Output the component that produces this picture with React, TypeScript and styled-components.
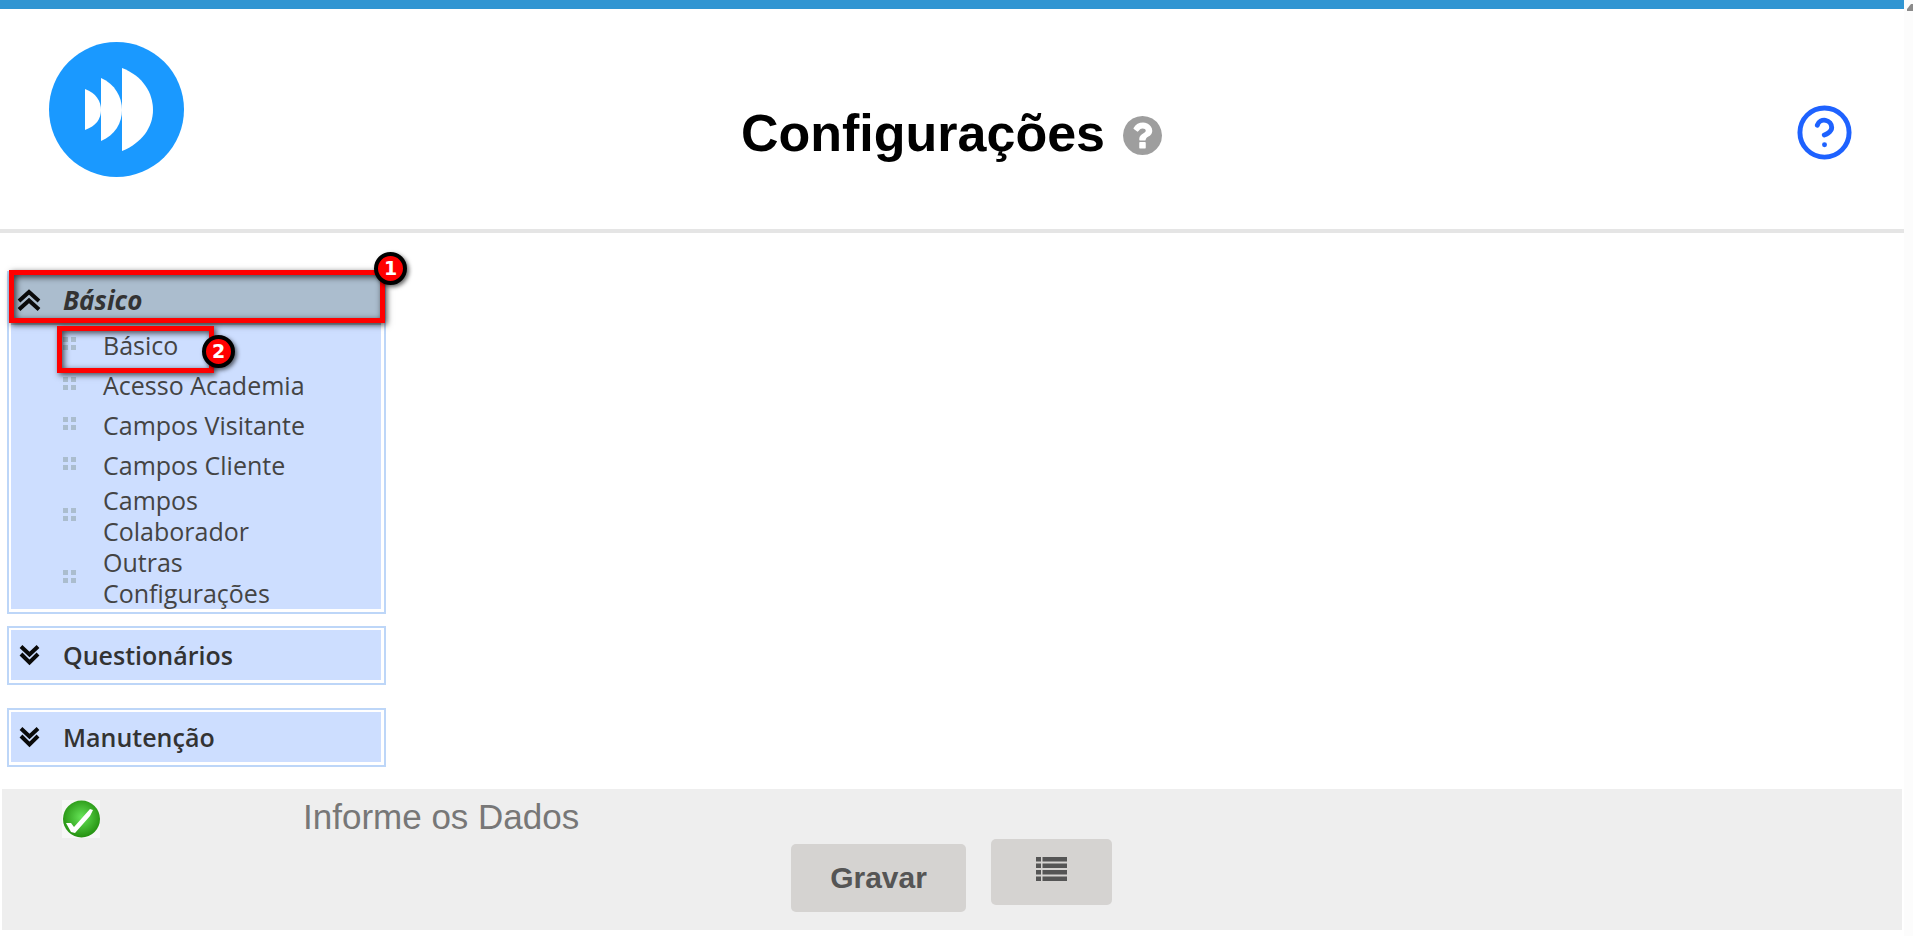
import React from "react";
import styled, { createGlobalStyle, css } from "styled-components";
import { CircleHelp } from "lucide-react";

const Global = createGlobalStyle`
  * { box-sizing: border-box; }
  body { margin: 0; background: #fff; font-family: "Liberation Sans", Arial, sans-serif; }
`;

const Page = styled.div`
  display: flex;
  min-height: 100vh;
`;

const Content = styled.div`
  flex: 1;
  min-width: 0;
`;

const ScrollTrack = styled.div`
  width: 9px;
  overflow: hidden;
  background: #fcfcfc;
  padding: 4px 0 0 3px;
  svg { display: block; }
`;

const Header = styled.header`
  display: grid;
  grid-template-columns: 1fr auto 1fr;
  align-items: center;
  height: 233px;
  padding: 0 50px 0 49px;
  border-top: 9px solid #3195d2;
  border-bottom: 4px solid #e5e5e5;
`;

const Logo = styled.svg`
  display: block;
  width: 135px;
  height: 135px;
  margin-bottom: 20px;
`;

const Title = styled.h1`
  display: flex;
  align-items: center;
  gap: 18px;
  margin: 28px 0 0;
  font-size: 52px;
  line-height: 60px;
  color: #000;
`;

const TitleHelp = styled.svg`
  width: 39px;
  height: 39px;
  margin-top: 4px;
  fill: #9e9e9e;
`;

const HelpLink = styled.a`
  justify-self: end;
  display: flex;
  margin-top: 26px;
  color: #1e62ff;
`;

const Nav = styled.nav`
  display: flex;
  flex-direction: column;
  width: 379px;
  margin: 38px 0 22px 7px;
  font-family: "Trebuchet MS", "Open Sans", sans-serif;
`;

const Panel = styled.section<{ $gap?: number }>`
  margin-bottom: ${(p) => p.$gap ?? 0}px;
  padding: 2px 3px 3px 2px;
  border: 2px solid #bdd6f8;
  background: #fff;
`;

const PanelHead = styled.button<{ $open?: boolean }>`
  position: relative;
  display: flex;
  align-items: center;
  gap: 24px;
  width: 100%;
  height: 50px;
  padding: 0 8px;
  border: 0;
  background: #cddeff;
  color: #333;
  font: 600 25px/32px "Trebuchet MS", "Open Sans", sans-serif;
  text-align: left;
  ${(p) => p.$open && css`background: #abbdce; font-style: italic; font-weight: 700; font-size: 26px;`}
`;

const Items = styled.ul`
  margin: 0;
  padding: 0;
  list-style: none;
  background: #cddeff;
`;

const Item = styled.li`
  position: relative;
  display: flex;
  align-items: center;
  gap: 27px;
  min-height: 40px;
  padding: 0 52px;
  a {
    max-width: 215px;
    color: #444;
    font-size: 25px;
    line-height: 31px;
    text-decoration: none;
  }
`;

const Dots = styled.svg`
  flex: none;
  width: 13px;
  height: 13px;
  margin-bottom: 4px;
  fill: #abbdce;
`;

const Callout = styled.span<{ $left: number; $top: number; $w: number; $h: number }>`
  position: absolute;
  z-index: 1;
  left: ${(p) => p.$left}px;
  top: ${(p) => p.$top}px;
  width: ${(p) => p.$w}px;
  height: ${(p) => p.$h}px;
  border: 5px solid #f00;
  box-shadow: 2px 2px 6px rgba(0, 0, 0, 0.7), inset 2px 2px 6px rgba(0, 0, 0, 0.7);
`;

const Badge = styled.span<{ $left: number; $top: number }>`
  position: absolute;
  z-index: 2;
  left: ${(p) => p.$left}px;
  top: ${(p) => p.$top}px;
  width: 33px;
  height: 33px;
  border: 4px solid #000;
  border-radius: 50%;
  background: #f00;
  color: #fff;
  font: bold 19px/24px "DejaVu Sans", sans-serif;
  text-align: center;
  box-shadow: 2px 2px 4px rgba(0, 0, 0, 0.6);
`;

const Footer = styled.footer`
  margin: 0 2px 6px;
  padding: 11px 61px 18px 60px;
  background: #eee;
`;

const Message = styled.div`
  display: flex;
  align-items: flex-start;
  gap: 203px;
  height: 39px;
  color: #777;
  font-size: 35px;
  line-height: 34px;
`;

const Actions = styled.div`
  display: flex;
  justify-content: center;
  gap: 25px;
`;

const ActionButton = styled.button<{ $icon?: boolean }>`
  display: flex;
  align-items: center;
  justify-content: center;
  width: ${(p) => (p.$icon ? 121 : 175)}px;
  height: ${(p) => (p.$icon ? 66 : 68)}px;
  margin-top: ${(p) => (p.$icon ? 0 : 5)}px;
  padding: ${(p) => (p.$icon ? "0 0 6px" : 0)};
  border: 0;
  border-radius: 5px;
  background: #d5d3d1;
  color: #555;
  font: bold 30px/34px "Liberation Sans", Arial, sans-serif;
`;

const Chevrons = ({ up }: { up?: boolean }) => (
  <svg width="20" height="22" viewBox="0 0 20 22" fill="none" stroke="#0a0a0a" strokeWidth="4" aria-hidden="true" overflow="visible">
    {up ? <path d="M0 12 10 3l10 9M0 20.500l10-9 10 9" /> : <path d="M2 2.500l8.500 8 8.500-8M2 10l8.500 8.500 8.500-8.500" />}
  </svg>
);

const CheckIcon = () => (
  <svg width="38" height="38" viewBox="0 0 38 38" aria-hidden="true">
    <defs>
      <radialGradient id="green" cx="0.5" cy="0.45" r="0.55">
        <stop offset="0" stopColor="#66e457" />
        <stop offset="1" stopColor="#249010" />
      </radialGradient>
    </defs>
    <rect width="38" height="38" fill="#f7f7f7" />
    <circle cx="19.500" cy="19" r="18.500" fill="url(#green)" />
    <path d="M4 23 9 23 12 27 28 9 31 10 28 16 13 33 9 32Z" fill="#fff" />
  </svg>
);

const items = ["Básico", "Acesso Academia", "Campos Visitante", "Campos Cliente", "Campos Colaborador", "Outras Configurações"];

export default function App() {
  return (
    <Page>
      <Global />
      <Content>
        <Header>
          <Logo viewBox="0 0 135 135" role="img" aria-label="Logo">
            <circle cx="67.5" cy="67.5" r="67.5" fill="#1a99ff" />
            <g fill="#fff">
              <path d="M36 47C47 51 52 59 52 68S47 84 36 88Z" />
              <path d="M52 36C66 42 73 55 73 68S66 93 52 99Z" />
              <path d="M73 26C94 34 104 51 104 68S93 101 73 109Z" />
            </g>
          </Logo>
          <Title>
            Configurações
            <TitleHelp viewBox="128 128 1536 1536" aria-hidden="true">
              <path d="M1024 1376v-192q0-14-9-23t-23-9h-192q-14 0-23 9t-9 23v192q0 14 9 23t23 9h192q14 0 23-9t9-23zm256-672q0-88-55.500-163t-138.500-116-170-41q-243 0-371 213-15 24 8 42l132 100q7 6 19 6 16 0 25-12 53-68 86-92 34-24 86-24 48 0 85.500 26t37.500 59q0 38-20 61t-68 45q-63 28-115.500 86.500t-52.500 125.500v36q0 14 9 23t23 9h192q14 0 23-9t9-23q0-19 21.500-49.500t54.500-49.500q32-18 49-28.500t46-35 44.500-48 28-60.500 12.500-81zm384 192q0 209-103 385.500t-279.500 279.500-385.500 103-385.500-103-279.500-279.500-103-385.500 103-385.500 279.500-279.500 385.500-103 385.500 103 279.500 279.500 103 385.500z" />
            </TitleHelp>
          </Title>
          <HelpLink href="#" aria-label="Ajuda">
            <CircleHelp size={59} />
          </HelpLink>
        </Header>
        <Nav>
          <Panel $gap={12}>
            <PanelHead $open type="button" aria-expanded="true">
              <Chevrons up />
              Básico
              <Callout $left={-2} $top={-5} $w={376} $h={53} />
              <Badge $left={363} $top={-23}>1</Badge>
            </PanelHead>
            <Items>
              {items.map((label, i) => (
                <Item key={label}>
                  <Dots viewBox="0 0 13 13" aria-hidden="true">
                    <path d="M0 0h5v5H0zM8 0h5v5H8zM0 8h5v5H0zM8 8h5v5H8z" />
                  </Dots>
                  <a href="#">{label}</a>
                  {i === 0 && (
                    <>
                      <Callout $left={46} $top={1} $w={157} $h={47} />
                      <Badge $left={191} $top={10}>2</Badge>
                    </>
                  )}
                </Item>
              ))}
            </Items>
          </Panel>
          <Panel $gap={23}>
            <PanelHead type="button" aria-expanded="false">
              <Chevrons />
              Questionários
            </PanelHead>
          </Panel>
          <Panel>
            <PanelHead type="button" aria-expanded="false">
              <Chevrons />
              Manutenção
            </PanelHead>
          </Panel>
        </Nav>
        <Footer>
          <Message role="status">
            <CheckIcon />
            Informe os Dados
          </Message>
          <Actions>
            <ActionButton type="button">Gravar</ActionButton>
            <ActionButton type="button" $icon aria-label="Lista">
              <svg width="31" height="24" viewBox="0 0 31 24" fill="#555" aria-hidden="true">
                <path d="M0 0h5v4.500H0zM6.500 0h24.500v4.500H6.500zM0 6.500h5v4.500H0zM6.500 6.500h24.500v4.500H6.500zM0 13h5v4.500H0zM6.500 13h24.500v4.500H6.500zM0 19.500h5v4.500H0zM6.500 19.500h24.500v4.500H6.500z" />
              </svg>
            </ActionButton>
          </Actions>
        </Footer>
      </Content>
      <ScrollTrack aria-hidden="true">
        <svg width="12" height="7" viewBox="0 0 12 7" fill="#8b8b8b">
          <path d="M0 7V5L4 0h4l4 5v2z" />
        </svg>
      </ScrollTrack>
    </Page>
  );
}
